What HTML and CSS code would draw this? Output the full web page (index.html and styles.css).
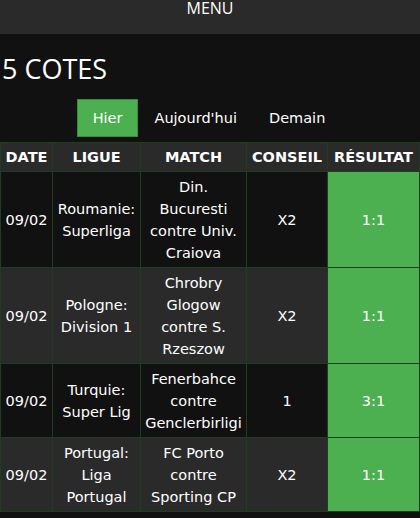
FILE: index.html
```html
<!DOCTYPE html>
<html lang="fr">
<head>
<meta charset="utf-8">
<title>5 Cotes</title>
<link rel="stylesheet" href="styles.css">
</head>
<body>
<div class="menu">MENU</div>
<h1 class="title">5 COTES</h1>
<nav class="tabs">
  <span class="tab active">Hier</span>
  <span class="tab">Aujourd'hui</span>
  <span class="tab">Demain</span>
</nav>
<table class="tips">
  <colgroup>
    <col class="c-date"><col class="c-league"><col class="c-match"><col class="c-tip"><col class="c-res">
  </colgroup>
  <thead>
    <tr><th>DATE</th><th>LIGUE</th><th>MATCH</th><th>CONSEIL</th><th>RÉSULTAT</th></tr>
  </thead>
  <tbody>
    <tr class="odd"><td>09/02</td><td>Roumanie: Superliga</td><td>Din. Bucuresti contre Univ. Craiova</td><td>X2</td><td class="res">1:1</td></tr>
    <tr class="even"><td>09/02</td><td>Pologne: Division 1</td><td>Chrobry Glogow contre S. Rzeszow</td><td>X2</td><td class="res">1:1</td></tr>
    <tr class="odd"><td>09/02</td><td>Turquie: Super Lig</td><td>Fenerbahce contre Genclerbirligi</td><td>1</td><td class="res">3:1</td></tr>
    <tr class="even"><td>09/02</td><td>Portugal: Liga Portugal</td><td>FC Porto contre Sporting CP</td><td>X2</td><td class="res">1:1</td></tr>
  </tbody>
</table>
</body>
</html>
```
FILE: styles.css
```css
html, body {
  margin: 0;
  padding: 0;
  background: #111111;
  color: #ffffff;
}
body {
  font-family: "DejaVu Sans", Verdana, sans-serif;
}
.menu {
  height: 34px;
  background: #2a2a2a;
  text-align: center;
  font-family: "Open Sans", "DejaVu Sans", sans-serif;
  font-size: 16px;
  line-height: 16px;
}
.title {
  margin: 17px 0 0 2px;
  font-family: "Open Sans", "DejaVu Sans", sans-serif;
  font-weight: normal;
  font-size: 27px;
  line-height: 36px;
  height: 48px;
}
.tabs {
  display: flex;
  justify-content: center;
  font-size: 14.5px;
  padding-right: 2px;
}
.tab {
  padding: 0 16px;
  height: 38px;
  line-height: 38px;
  box-sizing: border-box;
}
.tab.active {
  background: #4caf50;
  border: 1px solid #3b8a3e;
  line-height: 36px;
  padding: 0 15px;
}
.tips {
  margin-top: 5px;
  width: 419px;
  table-layout: fixed;
  border-collapse: collapse;
  font-size: 14.5px;
  line-height: 22px;
  text-align: center;
}
.c-date { width: 52px; }
.c-league { width: 88px; }
.c-match { width: 106px; }
.c-tip { width: 81px; }
.c-res { width: 92px; }
.tips th, .tips td {
  border: 1px solid #1f3d1f;
}
.tips th {
  background: #2a2a2a;
  font-weight: bold;
  padding: 3px 0;
}
.tips td {
  padding: 4px 3px 3px;
}
.odd td { background: #111111; }
.even td { background: #2a2a2a; }
.tips td.res { background: #4caf50; }
```
